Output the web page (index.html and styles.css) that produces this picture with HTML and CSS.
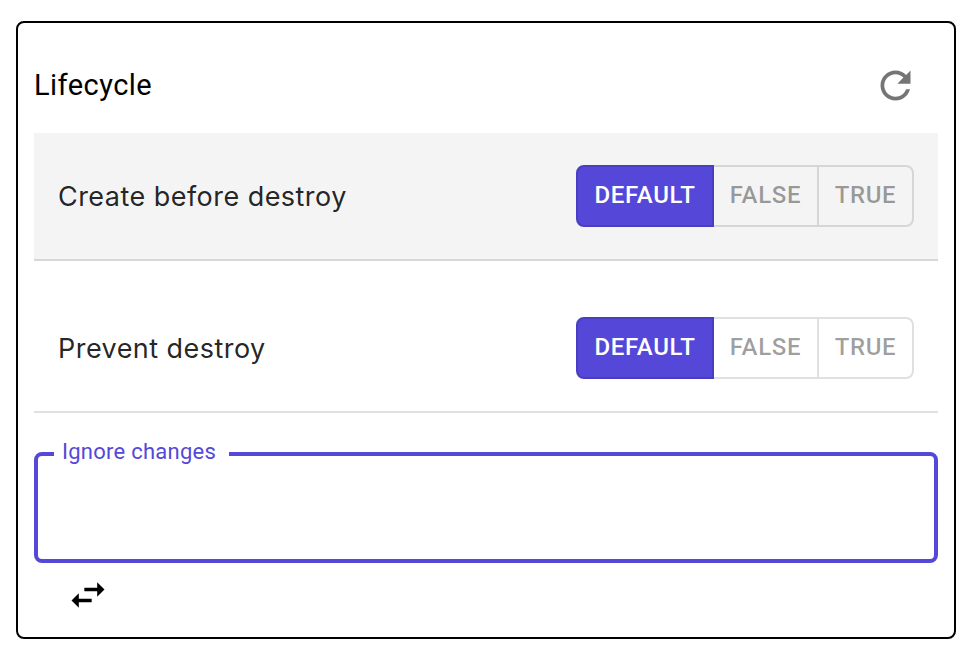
FILE: index.html
```html
<!DOCTYPE html>
<html lang="en">
<head>
<meta charset="utf-8">
<title>Lifecycle</title>
<link rel="stylesheet" href="styles.css">
</head>
<body>
<main class="card">
  <header class="card-header">
    <h1 class="title">Lifecycle</h1>
    <button class="icon-button" aria-label="Reset">
      <svg class="refresh" viewBox="0 0 24 24"><path d="M17.65 6.35C16.2 4.9 14.21 4 12 4c-4.42 0-7.99 3.58-7.99 8s3.57 8 7.99 8c3.73 0 6.84-2.55 7.73-6h-2.08c-.82 2.33-3.04 4-5.65 4-3.31 0-6-2.69-6-6s2.69-6 6-6c1.66 0 3.14.69 4.22 1.78L13 11h7V4l-2.35 2.35z"/></svg>
    </button>
  </header>
  <section class="row row-hover">
    <span class="label">Create before destroy</span>
    <div class="toggle">
      <button class="option selected">DEFAULT</button>
      <button class="option false">FALSE</button>
      <button class="option true">TRUE</button>
    </div>
  </section>
  <section class="row">
    <span class="label">Prevent destroy</span>
    <div class="toggle">
      <button class="option selected">DEFAULT</button>
      <button class="option false">FALSE</button>
      <button class="option true">TRUE</button>
    </div>
  </section>
  <fieldset class="field">
    <legend class="legend"><span class="legend-text">Ignore changes</span></legend>
  </fieldset>
  <svg class="swap" viewBox="0 0 24 24"><path d="M6.99 11 3 15l3.990 4v-3H14v-2H6.990v-3zM21 9l-3.990-4v3H10v2h7.010v3L21 9z"/></svg>
</main>
</body>
</html>
```
FILE: styles.css
```css
* { box-sizing: border-box; }
body { margin: 0; background: #fff; }
.card {
  width: 940px;
  height: 618px;
  margin: 21px 0 0 16px;
  padding: 14px 16px 0;
  border: 2px solid #000;
  border-radius: 8px;
  font-family: Roboto, sans-serif;
}
.card-header {
  display: flex;
  align-items: center;
  justify-content: space-between;
  height: 96px;
  padding-right: 20px;
}
.title { margin: 0; font-size: 29px; font-weight: 400; line-height: 40px; letter-spacing: .45px; color: #000; }
button { margin: 0; padding: 0; border: 0; background: none; }
.icon-button { display: flex; }
.refresh { width: 45px; height: 45px; fill: #757575; }
.row {
  display: flex;
  align-items: center;
  justify-content: space-between;
  height: 128px;
  padding: 0 24px;
  border-bottom: 2px solid #e0e0e0;
}
.row + .row { margin-top: 24px; }
.row-hover { background: #f4f4f4; border-color: #d7d7d7; }
.label { padding-top: 1px; font-family: Inter, sans-serif; font-size: 27px; line-height: 40px; letter-spacing: .46px; color: rgba(0,0,0,.87); }
.toggle { display: flex; height: 62px; }
.option {
  height: 62px;
  padding-bottom: 2px;
  border: 2px solid rgba(0,0,0,.12);
  font: 500 24px Roboto, sans-serif;
  letter-spacing: .65px;
  color: rgba(0,0,0,.38);
}
.selected { width: 138px; background: #5548d9; border-color: #493dc0; border-radius: 8px 0 0 8px; color: #fff; }
.false { width: 103px; border-left: 0; border-right: 0; }
.true { width: 97px; border-radius: 0 8px 8px 0; }
.field {
  height: 123px;
  margin: 27px 0 0;
  padding: 0 16px;
  border: 4px solid #5548d9;
  border-radius: 8px;
}
.legend { height: 28px; width: 175px; padding: 0 8px; font-size: 22px; line-height: 24px; color: #5548d9; }
.legend-text { white-space: nowrap; letter-spacing: .25px; }
.swap { display: block; width: 44px; height: 44px; margin: 10px 0 0 32px; fill: #000; }
```
